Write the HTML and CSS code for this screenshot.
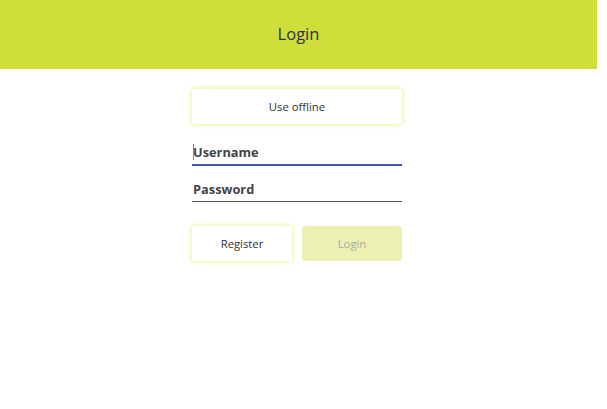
FILE: index.html
```html
<!DOCTYPE html>
<html>
<head>
<meta charset="utf-8">
<link rel="stylesheet" href="styles.css">
</head>
<body>
<div class="app">
  <header class="bar"><h1 class="title">Login</h1></header>
  <main class="form">
    <button class="btn wide">Use offline</button>
    <div class="field active"><span class="caret"></span><span class="label">Username</span></div>
    <div class="field"><span class="label">Password</span></div>
    <div class="actions">
      <button class="btn">Register</button>
      <button class="btn disabled">Login</button>
    </div>
  </main>
</div>
</body>
</html>
```
FILE: styles.css
```css
html, body { margin: 0; padding: 0; background: #fff; }
body { font-family: "Open Sans", "Noto Sans", sans-serif; color: #333; }
.app { width: 597px; }
.bar { height: 69px; background: #cfde3a; display: flex; align-items: center; justify-content: center; }
.title { margin: 0 0 3px; font-weight: 400; font-size: 16.5px; color: #2f3340; }
.form { width: 210px; margin: 20px 0 0 192px; display: flex; flex-direction: column; padding-bottom: 10px; }
.btn { box-sizing: border-box; height: 35px; background: #fff; border: none; border-radius: 3px;
  box-shadow: 0 0 4px 1px rgba(220, 232, 90, 0.6); font-family: inherit; font-size: 11.3px; color: #333; padding: 0; }
.wide { width: 210px; }
.field { height: 36px; box-sizing: border-box; border-bottom: 1px solid #555; display: flex; align-items: flex-end; padding-bottom: 3px; position: relative; }
.field.active { border-bottom: 2px solid #3f51b5; padding-bottom: 3px; margin-top: 6px; height: 36px; }
.label { font-weight: 700; font-size: 12.8px; color: #444; margin-left: 1px; }
.caret { position: absolute; left: 1px; bottom: 4px; width: 1px; height: 16px; background: #888; }
.actions { display: flex; gap: 10px; margin-top: 24px; }
.actions .btn { width: 100px; }
.btn.disabled { background: #ebf1b0; box-shadow: none; color: #aaa; }
```
